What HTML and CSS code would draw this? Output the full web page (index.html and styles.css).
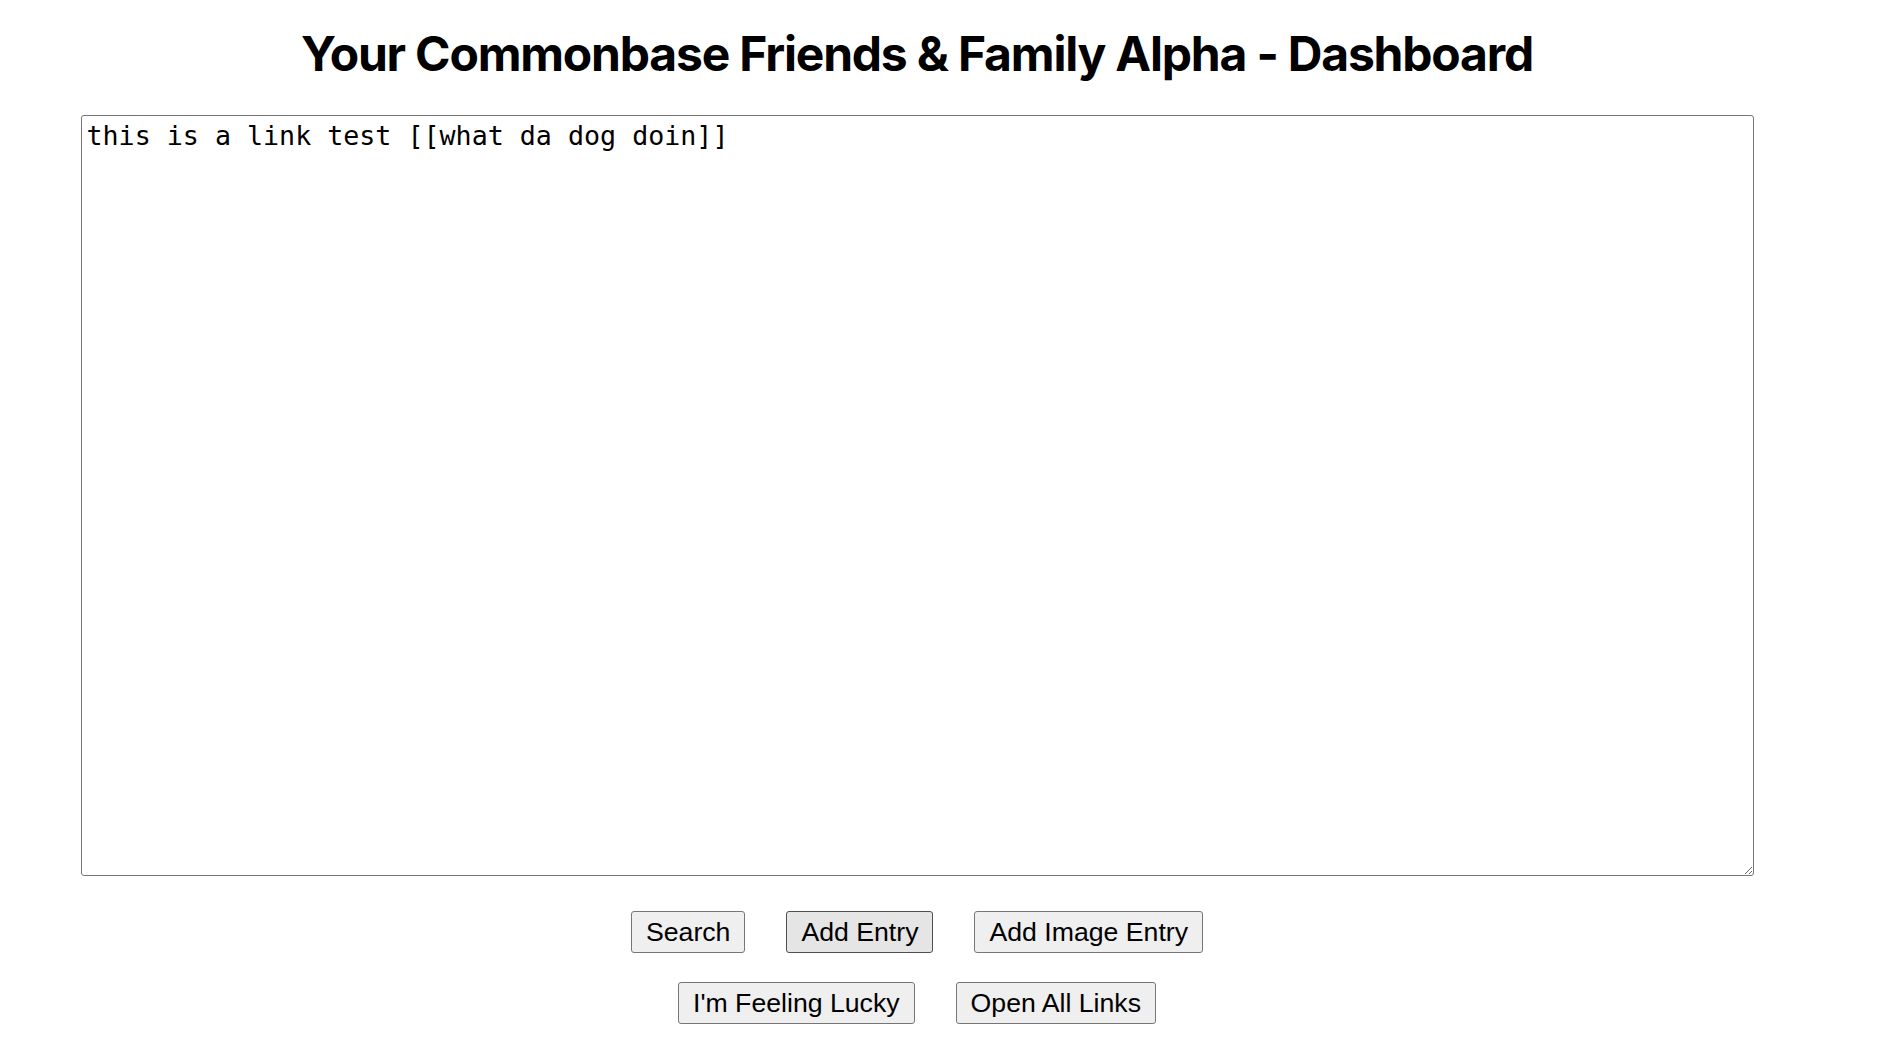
FILE: index.html
```html
<!DOCTYPE html>
<html lang="en">
<head>
<meta charset="utf-8">
<title>Your Commonbase Friends &amp; Family Alpha - Dashboard</title>
<link rel="stylesheet" href="styles.css">
</head>
<body>
<main class="page">
  <h1 class="title">Your Commonbase Friends &amp; Family Alpha - Dashboard</h1>
  <textarea class="entry-input">this is a link test [[what da dog doin]]</textarea>
  <div class="actions">
    <div class="action-row">
      <button class="btn">Search</button>
      <button class="btn btn-hover">Add Entry</button>
      <button class="btn">Add Image Entry</button>
    </div>
    <div class="action-row">
      <button class="btn">I'm Feeling Lucky</button>
      <button class="btn">Open All Links</button>
    </div>
  </div>
</main>
</body>
</html>
```
FILE: styles.css
```css
html, body {
  margin: 0;
  padding: 0;
  background: #ffffff;
}

.page {
  width: 1834px;
  display: flex;
  flex-direction: column;
  align-items: center;
}

.title {
  margin: 25px 0 0;
  font-family: Inter, "Liberation Sans", sans-serif;
  font-weight: 700;
  font-size: 48px;
  line-height: 58px;
  letter-spacing: -0.025em;
  color: #000;
  text-align: center;
}

.entry-input {
  display: block;
  box-sizing: border-box;
  width: 1673px;
  height: 761px;
  margin-top: 32px;
  padding: 4px 5px;
  border: 1px solid #767676;
  border-radius: 3px;
  font-family: "DejaVu Sans Mono", monospace;
  font-size: 26.67px;
  color: #000;
  background: #fff;
  resize: both;
  outline: none;
}

.actions {
  display: flex;
  flex-direction: column;
  align-items: center;
  gap: 29px;
  margin-top: 35px;
}

.action-row {
  display: flex;
  gap: 41px;
}

.btn {
  font-family: "Liberation Sans", Arial, sans-serif;
  font-size: 26.67px;
  line-height: 32px;
  padding: 4px 14px;
  border: 1px solid #767676;
  border-radius: 3px;
  background: #efefef;
  color: #000;
}

.btn-hover {
  background: #e5e5e5;
  border-color: #4f4f4f;
}
```
